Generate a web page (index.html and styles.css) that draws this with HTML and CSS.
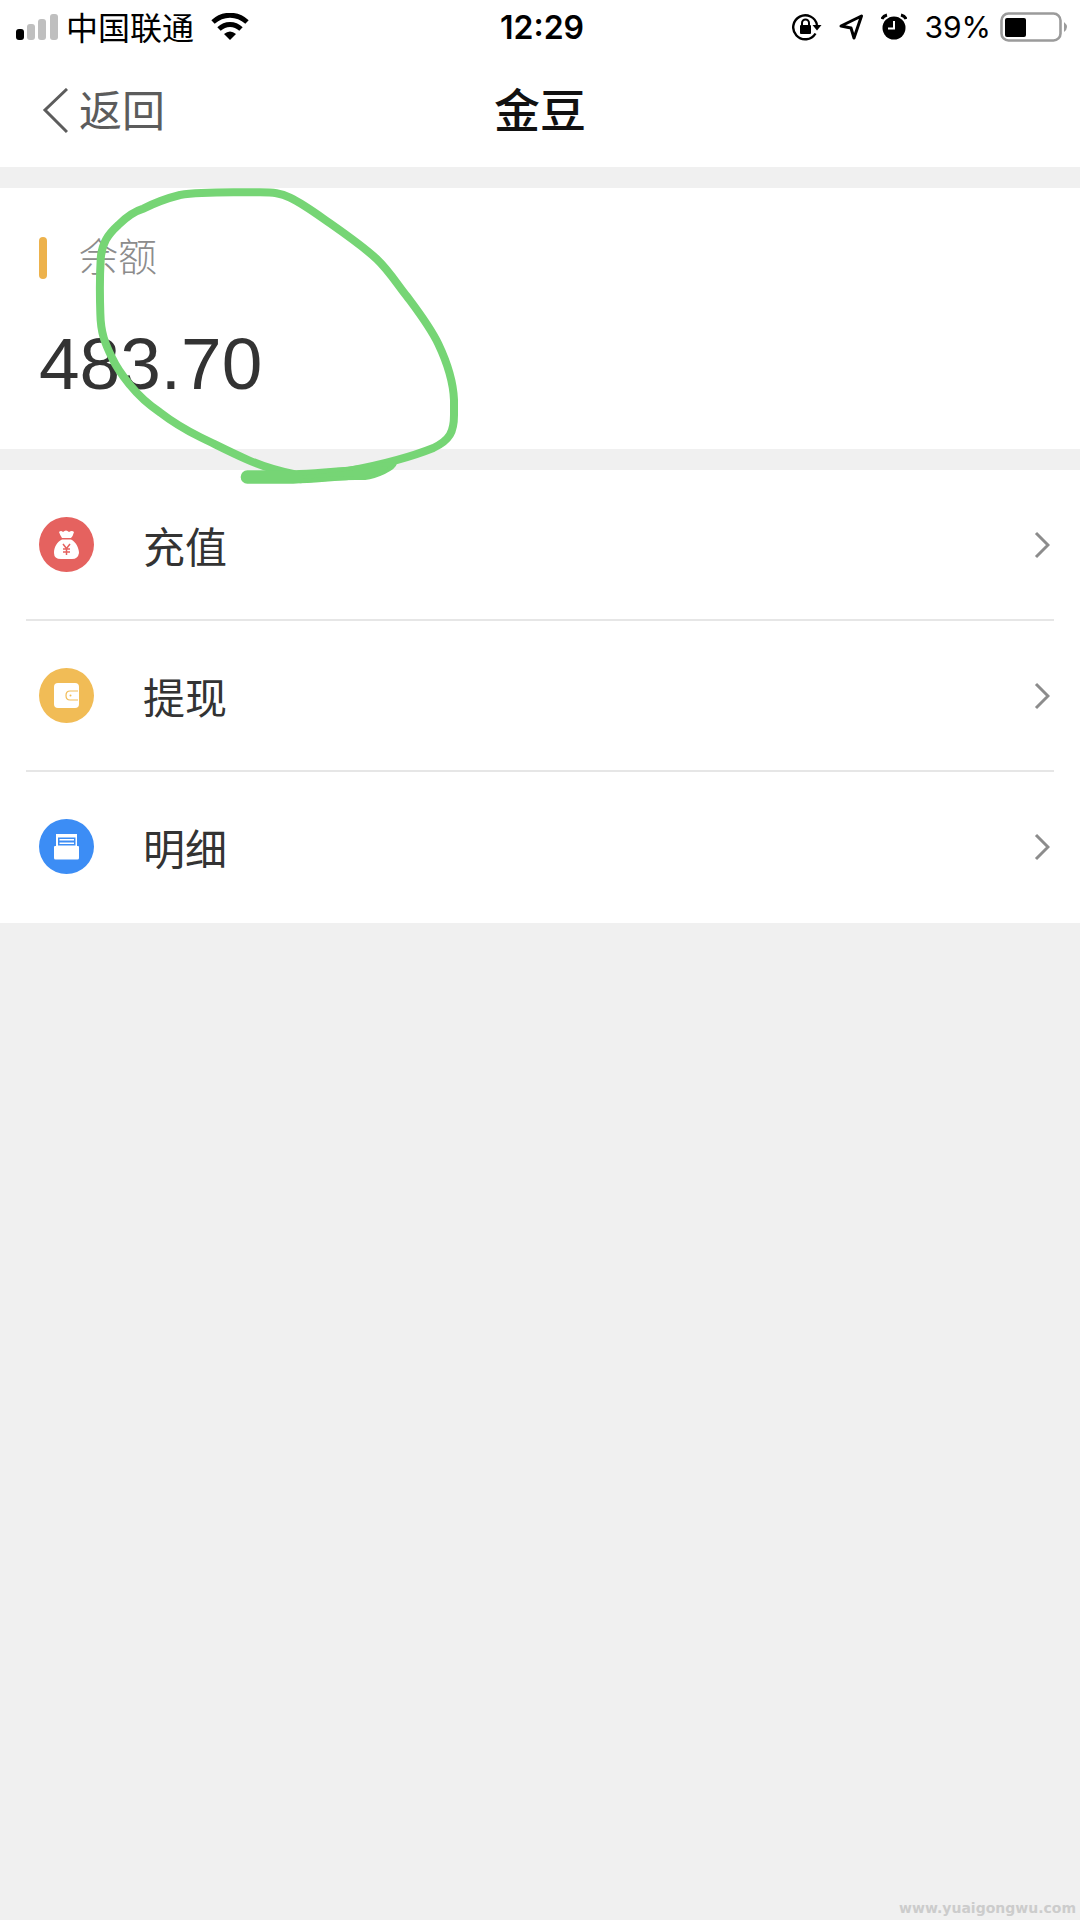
FILE: index.html
```html
<!DOCTYPE html>
<html lang="zh-CN">
<head>
    <meta charset="UTF-8">
    <meta name="viewport" content="width=device-width, initial-scale=1.0">
    <title>金豆</title>
    <link rel="stylesheet" href="styles.css">
</head>
<body>
    <div class="page">
        <!-- Status bar -->
        <div class="status-bar">
            <div class="status-left">
                <svg class="signal" width="42" height="28" viewBox="0 0 42 28">
                    <rect x="0" y="16" width="8" height="11" rx="3" fill="#000"/>
                    <rect x="11" y="11" width="8" height="16" rx="3" fill="#bfbfbf"/>
                    <rect x="22" y="6" width="8" height="21" rx="3" fill="#bfbfbf"/>
                    <rect x="34" y="1" width="8" height="26" rx="3" fill="#bfbfbf"/>
                </svg>
                <span class="carrier">中国联通</span>
                <svg class="wifi" width="38" height="28" viewBox="0 0 38 28">
                    <path d="M2 9C12 0 26 0 36 9" fill="none" stroke="#000" stroke-width="5"/>
                    <path d="M8 16C14.500 10 23.500 10 30 16" fill="none" stroke="#000" stroke-width="5"/>
                    <path d="M13 21Q19 16 25 21L19 27Z"/>
                </svg>
            </div>
            <div class="status-time">12:29</div>
            <div class="status-right">
                <svg width="30" height="28" viewBox="0 0 30 28">
                    <path d="M23.500 20.500A12 12 0 1 1 25 12" fill="none" stroke="#000" stroke-width="2.400"/>
                    <path d="M20.500 12H29.500L25 17.500Z"/>
                    <rect x="8" y="12" width="11" height="9" rx="1"/>
                    <path d="M10 13V10A3.500 3.500 0 0 1 17 10V13" fill="none" stroke="#000" stroke-width="2"/>
                </svg>
                <svg width="25" height="28" viewBox="0 0 25 28">
                    <path d="M2 13L22.500 3L15 25L12 15Z" fill="none" stroke="#000" stroke-width="3" stroke-linejoin="round"/>
                </svg>
                <svg width="26" height="28" viewBox="0 0 26 28">
                    <circle cx="13" cy="15" r="11.500"/>
                    <path d="M1 6Q2 3 6 2M25 6Q24 3 20 2" fill="none" stroke="#000" stroke-width="3"/>
                    <path d="M13 8V15.500H7" fill="none" stroke="#fff" stroke-width="2"/>
                </svg>
                <span class="battery-text">39%</span>
                <svg width="68" height="30" viewBox="0 0 68 30">
                    <rect x="1.500" y="1.500" width="59" height="27" rx="7" fill="none" stroke="#9b9b9b" stroke-width="2.600"/>
                    <rect x="5" y="6" width="21" height="19" rx="2"/>
                    <path d="M64 10Q70 15 64 20Z" fill="#9b9b9b"/>
                </svg>
            </div>
        </div>

        <!-- Nav -->
        <header class="nav">
            <a class="back" href="#">
                <svg width="26" height="46" viewBox="0 0 26 46">
                    <path d="M25 1L3 22L25 44" fill="none" stroke="#5c5c5c" stroke-width="3"/>
                </svg>
                <span>返回</span>
            </a>
            <h1>金豆</h1>
        </header>

        <!-- Balance -->
        <section class="balance">
            <div class="balance-label">余额</div>
            <div class="balance-value">483.70</div>
            <svg class="scribble" width="500" height="300" viewBox="0 84 1500 900" fill="none" stroke="#76d575" stroke-linecap="round" stroke-linejoin="round">
                <path stroke-width="24" d="M880 942C830 932 785 918 740 898C690 876 650 855 600 831C560 811 520 788 480 757C440 730 415 706 390 675C370 650 352 628 338 597C315 550 302 520 301 460C299 400 299 350 302 300C304 250 325 222 355 195C380 170 400 155 430 146C465 128 500 115 540 105C590 97 650 97 700 97H780C820 97 842 99 870 113C910 132 950 162 990 190C1040 225 1090 260 1130 297C1165 330 1190 370 1220 408C1255 455 1290 500 1315 552C1345 615 1360 670 1362 720V765C1362 815 1350 840 1300 864C1220 896 1140 915 1050 932C990 942 940 945 880 948"/>
                <path stroke-width="40" d="M742 951H880C940 950 980 944 1040 941"/>
                <path fill="#76d575" stroke-width="12" d="M900 940C1000 935 1100 915 1184 912C1182 925 1130 950 1095 954C1050 955 1000 953 900 964Z"/>
            </svg>
        </section>

        <!-- Menu -->
        <nav class="menu">
            <a class="menu-item" href="#">
                <svg class="menu-icon" viewBox="0 0 55 55">
                    <circle cx="27.500" cy="27.500" r="27.500" fill="#e5625f"/>
                    <path fill="#fff" d="M20 15Q22 13 24 15Q27 12 30 15Q33 13 35 15Q34 19 32 21H23Q21 18 20 15ZM23 22.500H32C37 25 40 31 40 36Q39 42 33 42H22Q15 42 15 36C15 30 18 25 23 22.500Z"/>
                    <path d="M24 27L27.500 31.500L31 27M27.500 31V38M24 32H31M24 35H31" fill="none" stroke="#e5625f" stroke-width="1.500"/>
                </svg>
                <span>充值</span>
                <svg class="arrow" viewBox="0 0 16 28"><path d="M2 2L14 14L2 26"/></svg>
            </a>
            <a class="menu-item" href="#">
                <svg class="menu-icon" viewBox="0 0 55 55">
                    <circle cx="27.500" cy="27.500" r="27.500" fill="#f1bc56"/>
                    <rect x="15" y="15" width="25" height="25" rx="4" fill="#fff"/>
                    <path d="M39 23H31Q27 23 27 27.500Q27 32 31 32H39" fill="none" stroke="#f1bc56" stroke-width="1.200"/>
                    <circle cx="31.500" cy="27.500" r="1" fill="#f1bc56"/>
                </svg>
                <span>提现</span>
                <svg class="arrow" viewBox="0 0 16 28"><path d="M2 2L14 14L2 26"/></svg>
            </a>
            <a class="menu-item" href="#">
                <svg class="menu-icon" viewBox="0 0 55 55">
                    <circle cx="27.500" cy="27.500" r="27.500" fill="#3c8df5"/>
                    <path fill="#fff" d="M17 15H38V27H39Q40 27 40 28V39Q40 40.500 38.500 40.500H16.500Q15 40.500 15 39V28Q15 27 16 27H17Z"/>
                    <rect x="19" y="18.500" width="17.500" height="8" fill="#3c8df5"/>
                    <path d="M20.500 20.800H35M20.500 24.300H35" stroke="#fff" stroke-width="1.600"/>
                </svg>
                <span>明细</span>
                <svg class="arrow" viewBox="0 0 16 28"><path d="M2 2L14 14L2 26"/></svg>
            </a>
        </nav>

        <footer class="watermark">www.yuaigongwu.com</footer>
    </div>
</body>
</html>
```
FILE: styles.css
```css
/* Global Styles */
* { margin: 0; padding: 0; box-sizing: border-box; }
body {
    font-family: "Liberation Sans", "Noto Sans CJK SC", sans-serif;
    color: #333;
    background-color: #f0f0f0;
}
a { color: inherit; text-decoration: none; }
svg { display: block; flex-shrink: 0; }
.page {
    display: flex;
    flex-direction: column;
    min-height: 100vh;
}

/* Status bar */
.status-bar {
    display: grid;
    grid-template-columns: 1fr auto 1fr;
    align-items: center;
    height: 54px;
    padding: 0 12px 0 16px;
    background-color: #fff;
    color: #000;
}
.status-left { display: flex; align-items: center; }
.carrier { margin: 0 17px 0 8px; padding-top: 3px; font-size: 32px; line-height: 48px; }
.status-time { font-family: Inter, sans-serif; font-size: 32px; font-weight: 600; }
.status-right { display: flex; align-items: center; justify-content: flex-end; gap: 17px; }
.battery-text { margin-right: -8px; font-family: Inter, sans-serif; font-size: 30px; }

/* Nav */
.nav {
    display: grid;
    grid-template-columns: 1fr auto 1fr;
    align-items: center;
    height: 113px;
    padding: 0 42px;
    background-color: #fff;
}
.nav h1 { font-size: 46px; font-weight: 500; line-height: 60px; color: #111; }
.back { display: flex; align-items: center; gap: 11px; font-size: 43px; color: #5c5c5c; }
.back span { padding-top: 2px; line-height: 60px; }

/* Balance */
.balance {
    position: relative;
    margin: 21px 0;
    padding: 49px 39px 38px;
    background-color: #fff;
}
.balance-label {
    display: flex;
    align-items: center;
    gap: 32px;
    height: 42px;
    font-size: 39px;
    font-weight: 300;
    line-height: 46px;
    color: #8c8c8c;
}
.balance-label::before {
    content: "";
    width: 8px;
    height: 42px;
    border-radius: 4px;
    background-color: #edb24c;
}
.balance-value { margin-top: 38px; font-size: 73px; line-height: 94px; }
.scribble { position: absolute; top: 0; left: 0; }

/* Menu */
.menu { background-color: #fff; }
.menu-item {
    display: flex;
    align-items: center;
    height: 151px;
    margin: 0 26px;
    padding: 0 4px 0 13px;
    border-bottom: 2px solid #e6e6e6;
    font-size: 42px;
}
.menu-item:last-child { border-bottom-color: transparent; }
.menu-icon { width: 55px; height: 55px; margin-right: 49px; }
.arrow { width: 16px; height: 28px; margin-left: auto; fill: none; stroke: #8c8c8c; stroke-width: 3; }

.watermark {
    margin-top: auto;
    padding: 0 4px 4px;
    text-align: right;
    font-family: "DejaVu Sans", sans-serif;
    font-size: 14px;
    font-weight: bold;
    color: #ccc;
}
```
